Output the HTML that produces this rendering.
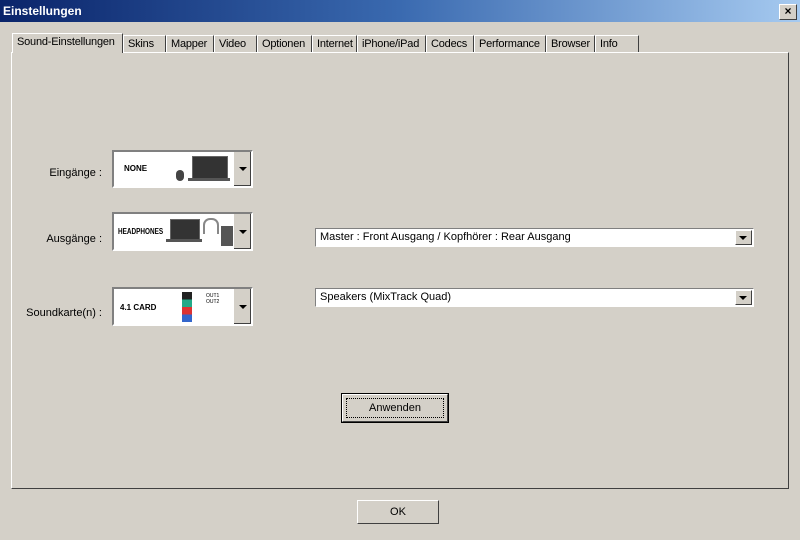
<!DOCTYPE html><html><head><style>
body{margin:0;width:800px;height:540px;background:#d4d0c8;font-family:"Liberation Sans",sans-serif;font-size:11px;position:relative;overflow:hidden;color:#000}
.a{position:absolute}
.title{left:0;top:0;width:800px;height:22px;background:linear-gradient(90deg,#0a246a,#3a6ab0 50%,#a6caf0);color:#fff;font-weight:bold;font-size:12px;line-height:22px;padding-left:3px;box-sizing:border-box}
.x{left:779px;top:4px;width:16px;height:14px;background:#d4d0c8;border:1px solid;border-color:#fff #404040 #404040 #fff;color:#000;font-weight:bold;font-size:12px;line-height:13px;text-align:center}
.tab{top:35px;height:17px;border-left:1px solid #fff;border-right:1px solid #404040;border-top:1px solid #fff;line-height:16px;padding-left:4px;box-sizing:border-box;letter-spacing:-0.2px}
.panel{left:11px;top:52px;width:778px;height:437px;border:1px solid;border-color:#fff #404040 #404040 #fff;box-sizing:border-box}
.lbl{text-align:right;width:80px}
.ic{left:112px;width:141px;background:#fff;border:2px solid;border-color:#808080 #fff #fff #808080;box-sizing:border-box}
.ar{right:0;top:0;bottom:0;width:17px;background:#d4d0c8;border-left:1px solid #fff;box-shadow:inset -1px -1px #404040}
.ar:after{content:"";position:absolute;left:5px;top:50%;margin-top:-2px;border:4px solid transparent;border-top:4px solid #000;border-bottom:0}
.cb{left:315px;width:439px;height:19px;background:#fff;border:1px solid;border-color:#808080 #fff #fff #808080;box-sizing:border-box;line-height:16px;padding-left:4px}
.cb .ar{width:15px;top:1px;bottom:1px;right:1px;border:1px solid;border-color:#fff #404040 #404040 #fff;box-shadow:none}
.cb .ar:after{left:3px}
.btn{background:#d4d0c8;border:1px solid;border-color:#fff #404040 #404040 #fff;text-align:center;box-sizing:border-box}
.bold{font-weight:bold;font-size:8px}
</style></head><body>
<div class="a title">Einstellungen</div>
<div class="a x">×</div>
<div class="a tab" style="left:12px;top:33px;height:20px;width:111px;background:#d4d0c8;z-index:2;border-bottom:none">Sound-Einstellungen</div>
<div class="a tab" style="left:123px;width:43px">Skins</div>
<div class="a tab" style="left:166px;width:48px">Mapper</div>
<div class="a tab" style="left:214px;width:43px">Video</div>
<div class="a tab" style="left:257px;width:55px">Optionen</div>
<div class="a tab" style="left:312px;width:45px">Internet</div>
<div class="a tab" style="left:357px;width:69px">iPhone/iPad</div>
<div class="a tab" style="left:426px;width:48px">Codecs</div>
<div class="a tab" style="left:474px;width:72px">Performance</div>
<div class="a tab" style="left:546px;width:49px">Browser</div>
<div class="a tab" style="left:595px;width:44px">Info</div>
<div class="a panel"></div>

<div class="a lbl" style="left:22px;top:167px">Eingänge :</div>
<div class="a lbl" style="left:22px;top:233px">Ausgänge :</div>
<div class="a lbl" style="left:22px;top:307px">Soundkarte(n) :</div>

<div class="a ic" style="top:150px;height:38px"><div class="a bold" style="left:10px;top:12px">NONE</div>
<div class="a" style="left:78px;top:4px;width:34px;height:22px;background:#333;border:1px solid #666"></div><div class="a" style="left:74px;top:26px;width:42px;height:3px;background:#555"></div><div class="a" style="left:62px;top:18px;width:8px;height:11px;background:#444;border-radius:4px"></div>
<div class="a ar"></div></div>
<div class="a ic" style="top:212px;height:39px"><div class="a bold" style="left:4px;top:13px;font-size:8px;transform:scaleX(0.8);transform-origin:left">HEADPHONES</div>
<div class="a" style="left:56px;top:5px;width:28px;height:20px;background:#333;border:1px solid #666"></div><div class="a" style="left:52px;top:25px;width:36px;height:3px;background:#555"></div>
<div class="a" style="left:89px;top:4px;width:12px;height:14px;border:2px solid #888;border-bottom:none;border-radius:7px 7px 0 0"></div><div class="a" style="left:107px;top:12px;width:12px;height:20px;background:#555"></div>
<div class="a ar"></div></div>
<div class="a ic" style="top:287px;height:39px"><div class="a bold" style="left:6px;top:14px">4.1 CARD</div>
<div class="a" style="left:68px;top:3px;width:10px;height:30px;background:linear-gradient(#222 25%,#2a8 25% 50%,#d33 50% 75%,#36c 75%)"></div>
<div class="a" style="left:92px;top:4px;font-size:5px">OUT1<br>OUT2</div>
<div class="a ar"></div></div>

<div class="a cb" style="top:228px">Master : Front Ausgang / Kopfhörer : Rear Ausgang<div class="a ar"></div></div>
<div class="a cb" style="top:288px">Speakers (MixTrack Quad)<div class="a ar"></div></div>

<div class="a" style="left:341px;top:393px;width:108px;height:30px;border:1px solid #000;box-sizing:border-box"><div class="btn" style="width:106px;height:28px;line-height:26px;position:relative"><div style="position:absolute;left:3px;top:3px;right:3px;bottom:3px;border:1px dotted #000"></div>Anwenden</div></div>
<div class="a btn" style="left:357px;top:500px;width:82px;height:24px;line-height:22px">OK</div>
</body></html>
